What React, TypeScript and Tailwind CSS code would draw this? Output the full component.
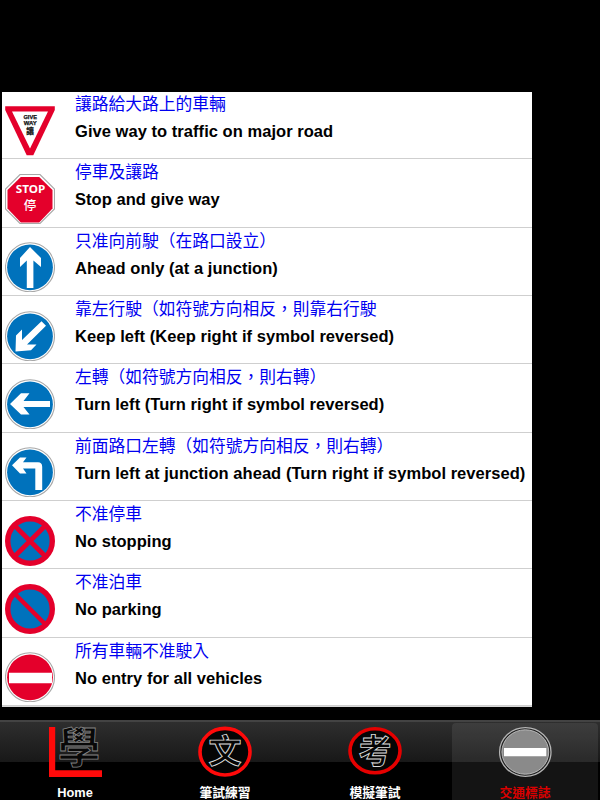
import React from 'react';

interface RoadSign {
  zh: string;
  en: string;
  icon: React.ReactNode;
}

interface Tab {
  label: string;
  icon: React.ReactNode;
  active?: boolean;
}

// White plate with a soft grey rim behind the round signs
const Plate: React.FC = () => (
  <circle cx="25" cy="25.3" r="24.5" fill="#fff" stroke="#a8a8a8" strokeWidth="1.1" />
);

// Blue mandatory sign with a white arrow inside
const BlueSign: React.FC<{ children: React.ReactNode }> = ({ children }) => (
  <>
    <Plate />
    <circle cx="25" cy="25.3" r="22.9" fill="#0072bc" />
    {children}
  </>
);

const signs: RoadSign[] = [
  {
    zh: '讓路給大路上的車輛',
    en: 'Give way to traffic on major road',
    icon: (
      <>
        <path d="M0.2 0.3H49.8V4L28.3 49.3H21.7L0.2 4Z" fill="#e4002b" />
        <path d="M7 5.6H43L25 42.5Z" fill="#fff" />
        <g fill="#111" stroke="#111" strokeWidth="0.25" textAnchor="middle" fontWeight="700" fontFamily="'Liberation Sans', 'Noto Sans CJK TC', sans-serif">
          <text x="25.2" y="12.6" fontSize="5.6" textLength="13.5" lengthAdjust="spacingAndGlyphs">GIVE</text>
          <text x="25.2" y="18.8" fontSize="5.6" textLength="13" lengthAdjust="spacingAndGlyphs">WAY</text>
          <text x="25" y="28.3" fontSize="7.6">讓</text>
        </g>
      </>
    ),
  },
  {
    zh: '停車及讓路',
    en: 'Stop and give way',
    icon: (
      <>
        <path d="M15 0.5H35L49.5 15V35L35 49.5H15L0.5 35V15Z" fill="#fff" stroke="#a8a8a8" strokeWidth="1.1" />
        <path d="M15.8 3H34.2L47.5 16V34.5L34.2 48.5H15.8L2.5 34.5V16Z" fill="#e4002b" />
        <g fill="#fff" textAnchor="middle" fontWeight="700" fontFamily="'Noto Sans', 'Noto Sans CJK TC', sans-serif">
          <text x="25.5" y="19.2" fontSize="11.4" textLength="29.5" lengthAdjust="spacingAndGlyphs">STOP</text>
          <text x="25" y="35.7" fontSize="12.5" fontWeight="500">停</text>
        </g>
      </>
    ),
  },
  {
    zh: '只准向前駛（在路口設立）',
    en: 'Ahead only (at a junction)',
    icon: (
      <BlueSign>
        <path d="M25 5L36 16V25L28.4 18.5V46H21.8V18.5L15 25V16Z" fill="#fff" />
      </BlueSign>
    ),
  },
  {
    zh: '靠左行駛（如符號方向相反，則靠右行駛',
    en: 'Keep left (Keep right if symbol reversed)',
    icon: (
      <BlueSign>
        <path d="M36.5 10.3L41 14.8L22 33.5H31.5L26 39.2L10.5 40.5L11 24.5L17 18.5V29Z" fill="#fff" />
      </BlueSign>
    ),
  },
  {
    zh: '左轉（如符號方向相反，則右轉）',
    en: 'Turn left (Turn right if symbol reversed)',
    icon: (
      <BlueSign>
        <path d="M5 25L16 14.2H24.5L18.5 22H45V28H18.5L24.5 35.5H16Z" fill="#fff" />
      </BlueSign>
    ),
  },
  {
    zh: '前面路口左轉（如符號方向相反，則右轉）',
    en: 'Turn left at junction ahead (Turn right if symbol reversed)',
    icon: (
      <BlueSign>
        <path d="M7 18.3L15 10.5H21.5L18 15.3H33Q37.2 15.3 37.2 19.8V43H30.3V21.5H18L21.5 26.5H15Z" fill="#fff" />
      </BlueSign>
    ),
  },
  {
    zh: '不准停車',
    en: 'No stopping',
    icon: (
      <>
        <circle cx="25" cy="25" r="22.3" fill="#0072bc" stroke="#e4002b" strokeWidth="5.4" />
        <path d="M10 10L40 40M40 10L10 40" stroke="#e4002b" strokeWidth="4.8" />
      </>
    ),
  },
  {
    zh: '不准泊車',
    en: 'No parking',
    icon: (
      <>
        <circle cx="25" cy="25" r="22.3" fill="#0072bc" stroke="#e4002b" strokeWidth="5.4" />
        <path d="M10 10L40 40" stroke="#e4002b" strokeWidth="4.5" />
      </>
    ),
  },
  {
    zh: '所有車輛不准駛入',
    en: 'No entry for all vehicles',
    icon: (
      <>
        <Plate />
        <circle cx="25" cy="25.3" r="22.9" fill="#e4002b" />
        <path d="M4 20.7H47V31.2H4Z" fill="#fff" />
      </>
    ),
  },
];

const tabs: Tab[] = [
  {
    label: 'Home',
    icon: (
      <>
        <path d="M1 1H7.2V44.3H54V51H1Z" fill="#ff0a0a" />
        <text x="31" y="37.3" fontSize="42" fill="#080808" stroke="#858585" strokeWidth="0.8" textAnchor="middle" fontWeight="700">學</text>
      </>
    ),
  },
  {
    label: '筆試練習',
    icon: (
      <>
        <ellipse cx="27" cy="25.7" rx="25" ry="23.3" fill="#050505" stroke="#ff0a0a" strokeWidth="3.6" />
        <text x="27" y="37.4" fontSize="33" fill="#050505" stroke="#ddd" strokeWidth="0.9" textAnchor="middle" fontWeight="700">文</text>
      </>
    ),
  },
  {
    label: '模擬筆試',
    icon: (
      <>
        <ellipse cx="27" cy="24.8" rx="25" ry="22" fill="#050505" stroke="#e60000" strokeWidth="3.6" />
        <text x="27" y="37" fontSize="33" fill="#050505" stroke="#ddd" strokeWidth="0.9" textAnchor="middle" fontWeight="700">考</text>
      </>
    ),
  },
  {
    label: '交通標誌',
    active: true,
    icon: (
      <>
        <ellipse cx="27.3" cy="26" rx="25.7" ry="24.3" fill="#222" stroke="#b5b5b5" strokeWidth="1.3" />
        <ellipse cx="27.3" cy="26" rx="23.4" ry="22.2" fill="#8a8a8a" stroke="#bbb" strokeWidth="1" />
        <path d="M6 22H48.3V30.2H6Z" fill="#fff" />
      </>
    ),
  },
];

const SignRow: React.FC<{ sign: RoadSign }> = ({ sign }) => (
  <li className="flex h-[68.35px] shrink-0 border-b border-[#cfcfcf] pl-[3px]">
    <svg className="mt-[14.7px] h-[50px] w-[50px] shrink-0" viewBox="0 0 50 50">
      {sign.icon}
    </svg>
    <div className="ml-5 pt-[2px] whitespace-nowrap">
      <p className="h-[24px] text-[16.75px] leading-[23px] text-[#0000f0]">{sign.zh}</p>
      <p className="pt-[3px] text-[16.5px] leading-[22px] font-bold tracking-[0.045px] text-black">{sign.en}</p>
    </div>
  </li>
);

const TabItem: React.FC<{ tab: Tab }> = ({ tab }) => (
  <button className="flex w-[150px] justify-center pt-[1px]">
    <div className={`flex h-[80px] w-[146px] flex-col items-center rounded-[4px] pt-[3px] ${tab.active ? 'bg-white/8' : ''}`}>
      <svg className="h-[52px] w-[54px] shrink-0" viewBox="0 0 54 52">
        {tab.icon}
      </svg>
      <span className={`mt-[6px] text-[12.8px] leading-[18px] font-bold whitespace-nowrap ${tab.active ? 'text-[#d90000]' : 'text-white'}`}>
        {tab.label}
      </span>
    </div>
  </button>
);

const App: React.FC = () => {
  return (
    <div className="flex h-[800px] w-[600px] flex-col overflow-hidden bg-black pt-[92px] font-['Liberation_Sans','Noto_Sans_CJK_TC',sans-serif]">
      {/* Sign list */}
      <main className="ml-[2px] h-[615px] w-[530px] shrink-0 overflow-hidden bg-white">
        <ul className="-mt-[1.2px] flex flex-col">
          {signs.map((sign) => (
            <SignRow key={sign.zh} sign={sign} />
          ))}
        </ul>
        <div className="h-2 bg-[#d8d8d8]"></div>
      </main>

      {/* Tab bar */}
      <nav className="mt-[13px] flex h-[80px] shrink-0 overflow-hidden border-t-2 border-[#434343] bg-[linear-gradient(to_bottom,#2e2e2e_0px,#181818_40px,#000_40px)]">
        {tabs.map((tab) => (
          <TabItem key={tab.label} tab={tab} />
        ))}
      </nav>
    </div>
  );
};

export default App;
